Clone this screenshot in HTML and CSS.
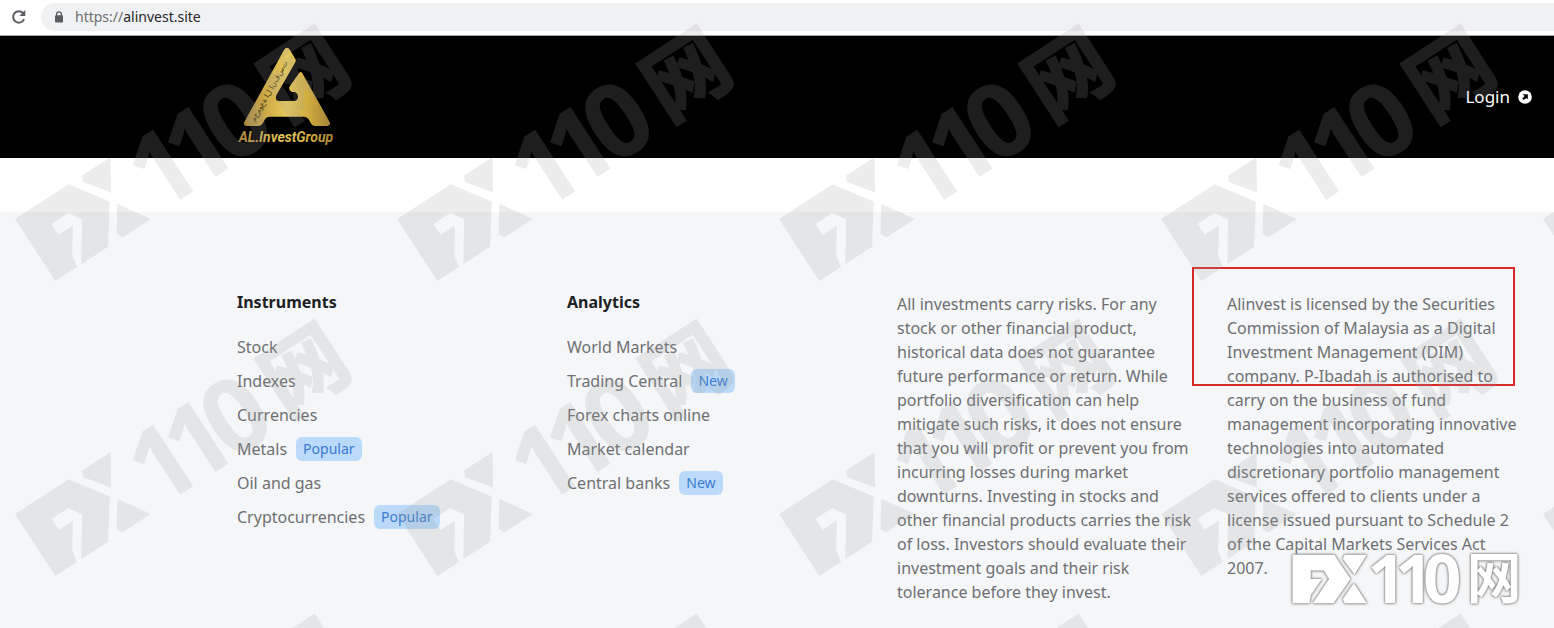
FILE: index.html
```html
<!DOCTYPE html>
<html lang="en">
<head>
  <meta charset="UTF-8">
  <meta name="viewport" content="width=device-width, initial-scale=1.0">
  <title>AL.InvestGroup</title>
  <link rel="stylesheet" href="styles.css">
</head>
<body>
  <div class="toolbar">
    <button type="button" class="reload" aria-label="Reload">
      <svg width="16" height="16" viewBox="0 0 16 16">
        <path d="M13.1 10.2A5.7 5.7 0 1 1 12.2 4.2" fill="none" stroke="#5a5d61" stroke-width="2"/>
        <path d="M14.3 1v6H8.4z" fill="#5a5d61"/>
      </svg>
    </button>
    <div class="address">
      <svg width="10" height="12" viewBox="0 0 10 12">
        <path d="M2.6 5V3.3a2.4 2.4 0 0 1 4.8 0V5" fill="none" stroke="#5a5d61" stroke-width="1.3"/>
        <rect x="1" y="4.3" width="8" height="7.2" rx="1" fill="#5a5d61"/>
      </svg>
      <label for="url">https://</label>
      <input type="text" id="url" value="alinvest.site">
    </div>
  </div>

  <header class="header">
    <a href="#" class="logo" aria-label="AL.InvestGroup">
      <svg width="120" height="120" viewBox="0 0 360 360">
        <defs>
          <linearGradient id="gold" x1="0" y1="0" x2="1" y2="0">
            <stop offset="0" stop-color="#a8873f"/>
            <stop offset="0.3" stop-color="#d3b04b"/>
            <stop offset="0.5" stop-color="#e6c95c"/>
            <stop offset="0.75" stop-color="#d0ab3f"/>
            <stop offset="1" stop-color="#a58335"/>
          </linearGradient>
        </defs>
        <path fill="url(#gold)" d="M162 39Q171 26 180 39L196 66Q199 71 196 76L139 175Q134 191 147 192L192 192Q204 191 204 179Q203 167 193 165L186 165Q173 158 180 147L207 109Q212 101 217 109L299 255Q303 266 292 267L256 267Q248 267 244 261L236 247Q231 239 222 239L118 239Q109 239 105 247L97 261Q93 267 84 267L50 267Q38 266 43 255Z"/>
        <text class="logo-arabic" transform="translate(74 256) rotate(-61)">م&zwnj;ج&zwnj;م&zwnj;و&zwnj;ع&zwnj;ة ا&zwnj;ل ا&zwnj;ن&zwnj;ف&zwnj;س&zwnj;ت</text>
        <text class="logo-name" x="26" y="314" fill="url(#gold)">AL.InvestGroup</text>
      </svg>
    </a>
    <a href="#" class="login">
      Login
      <svg width="14" height="14" viewBox="0 0 14 14">
        <circle cx="7" cy="7" r="6.8" fill="#fff"/>
        <path d="M4.6 4.2h5.2v5.2L8.3 7.9 5.6 10 4.2 8.6l2.4-2.6z" fill="#000"/>
      </svg>
    </a>
  </header>

  <main class="content"></main>

  <footer class="footer">
    <nav>
      <h2>Instruments</h2>
      <ul>
        <li><a href="#">Stock</a></li>
        <li><a href="#">Indexes</a></li>
        <li><a href="#">Currencies</a></li>
        <li><a href="#">Metals</a><span class="badge">Popular</span></li>
        <li><a href="#">Oil and gas</a></li>
        <li><a href="#">Cryptocurrencies</a><span class="badge">Popular</span></li>
      </ul>
    </nav>
    <nav>
      <h2>Analytics</h2>
      <ul>
        <li><a href="#">World Markets</a></li>
        <li><a href="#">Trading Central</a><span class="badge">New</span></li>
        <li><a href="#">Forex charts online</a></li>
        <li><a href="#">Market calendar</a></li>
        <li><a href="#">Central banks</a><span class="badge">New</span></li>
      </ul>
    </nav>
    <p>All investments carry risks. For any<br>
      stock or other financial product,<br>
      historical data does not guarantee<br>
      future performance or return. While<br>
      portfolio diversification can help<br>
      mitigate such risks, it does not ensure<br>
      that you will profit or prevent you from<br>
      incurring losses during market<br>
      downturns. Investing in stocks and<br>
      other financial products carries the risk<br>
      of loss. Investors should evaluate their<br>
      investment goals and their risk<br>
      tolerance before they invest.</p>
    <p class="license">Alinvest is licensed by the Securities<br>
      Commission of Malaysia as a Digital<br>
      Investment Management (DIM)<br>
      company. P-Ibadah is authorised to<br>
      carry on the business of fund<br>
      management incorporating innovative<br>
      technologies into automated<br>
      discretionary portfolio management<br>
      services offered to clients under a<br>
      license issued pursuant to Schedule 2<br>
      of the Capital Markets Services Act<br>
      2007.</p>
  </footer>

  <!-- repeated watermark -->
  <svg class="watermark" aria-hidden="true">
    <defs>
      <g id="fx-mark">
        <path fill-rule="evenodd" d="M0 0H64L89 37L63 74H31L56 37L48 24H28V37H45L28 62L26 74H0Z"/>
        <path d="M80 0H114L95 30L77 6Z"/>
        <path d="M94 43L114 74H80L77 68Z"/>
      </g>
      <pattern id="tile" y="10" width="382" height="295" patternUnits="userSpaceOnUse">
        <g transform="translate(15 209) rotate(-33)" class="mark-text">
          <use href="#fx-mark"/>
          <text x="122 164 209" y="74">110</text>
          <text class="cjk" x="279" y="67">网</text>
        </g>
      </pattern>
    </defs>
    <rect width="100%" height="100%" fill="url(#tile)"/>
  </svg>

  <svg class="stamp mark-text" width="240" height="60" viewBox="-9 -9 366 92" aria-hidden="true">
    <use href="#fx-mark"/>
    <text x="115 157 200" y="74">110</text>
    <text class="cjk" x="267" y="66">网</text>
  </svg>
</body>
</html>
```

FILE: styles.css
```css
* {
  box-sizing: border-box;
}

body {
  position: relative;
  display: flex;
  flex-direction: column;
  min-height: 100vh;
  margin: 0;
  overflow-x: hidden;
  font-family: "Noto Sans", "Open Sans", sans-serif;
  font-size: 16px;
  line-height: 24px;
  color: #6e7072;
  background-color: #fff;
}

a {
  color: inherit;
  text-decoration: none;
}

.toolbar {
  display: flex;
  align-items: center;
  gap: 14px;
  height: 36px;
  padding: 0 0 2px 11px;
  border-bottom: 1px solid #a5a6a8;
}

.reload {
  display: flex;
  padding: 0;
  border: none;
  background: none;
}

.address {
  flex: 1;
  display: flex;
  align-items: center;
  height: 28px;
  padding-left: 13px;
  border-radius: 14px 0 0 14px;
  background-color: #f0f1f3;
  font-size: 14px;
}

.address label {
  margin-left: 11px;
}

.address input {
  flex: 1;
  padding: 0;
  border: none;
  outline: none;
  background: none;
  font: inherit;
  color: #26282b;
}

.header {
  display: flex;
  align-items: center;
  justify-content: space-between;
  height: 122px;
  padding: 0 22px 0 230px;
  background-color: #000;
}

.logo,
.logo svg {
  display: block;
}

.logo-name {
  font: italic bold 42px Roboto, Arial, sans-serif;
}

.logo-arabic {
  font: 22px "DejaVu Sans", sans-serif;
  direction: ltr;
  unicode-bidi: bidi-override;
  fill: #3d3214;
}

.login {
  display: flex;
  align-items: center;
  gap: 8px;
  font-size: 17px;
  color: #fff;
}

.content {
  height: 54px;
}

.footer {
  flex: 1;
  display: grid;
  grid-template-columns: repeat(4, 1fr);
  gap: 30px;
  padding: 80px 27px 24px 237px;
  background-color: #f4f6f8;
}

.footer h2 {
  margin: 0 0 23px;
  font-size: 16px;
  line-height: 20px;
  color: #1c1f23;
}

.footer ul {
  margin: 0;
  padding: 0;
  list-style: none;
}

.footer li {
  display: flex;
  gap: 9px;
  margin-bottom: 10px;
}

.footer p {
  margin: 0;
  white-space: nowrap;
}

.badge {
  padding: 0 7px;
  border-radius: 6px;
  font-size: 14px;
  color: #3a7bd0;
  background-color: #bbdafa;
}

.license {
  position: relative;
}

/* red frame round the licence claim */
.license::after {
  content: "";
  position: absolute;
  top: -25px;
  left: -35px;
  width: 319px;
  height: 115px;
  border: 2px solid #d8282a;
}

.mark-text {
  font: bold 103px "Open Sans", "Noto Sans", sans-serif;
}

.mark-text .cjk {
  font: bold 84px "Noto Sans CJK SC", sans-serif;
}

.watermark {
  position: absolute;
  top: 0;
  left: 0;
  width: 100%;
  height: 100%;
  fill: #a0a0a0;
  opacity: 0.19;
  pointer-events: none;
}

.watermark .cjk {
  stroke: #a0a0a0;
  stroke-width: 2px;
}

.stamp {
  position: absolute;
  right: 28px;
  bottom: 19px;
  fill: #fff;
  filter: drop-shadow(0 0 1px #777) drop-shadow(0 0 1px #999);
}
```
